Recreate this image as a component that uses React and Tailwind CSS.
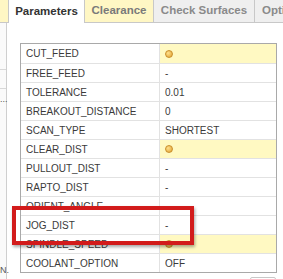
import React from 'react';

const rows = [
  { name: 'CUT_FEED', value: 'dot', hi: true },
  { name: 'FREE_FEED', value: '-' },
  { name: 'TOLERANCE', value: '0.01' },
  { name: 'BREAKOUT_DISTANCE', value: '0' },
  { name: 'SCAN_TYPE', value: 'SHORTEST' },
  { name: 'CLEAR_DIST', value: 'dot', hi: true },
  { name: 'PULLOUT_DIST', value: '-' },
  { name: 'RAPTO_DIST', value: '-' },
  { name: 'ORIENT_ANGLE', value: '' },
  { name: 'JOG_DIST', value: '-' },
  { name: 'SPINDLE_SPEED', value: 'dot', hi: true },
  { name: 'COOLANT_OPTION', value: 'OFF' },
];

const Dot = () => (
  <span className="inline-block w-[8px] h-[8px] rounded-full border border-[#c98f2c] bg-[radial-gradient(circle_at_35%_35%,#ffe08a,#e0a030)]" />
);

export default function App() {
  return (
    <div className="relative w-[283px] h-[279px] overflow-hidden bg-white text-[#3a3a3a] font-['Liberation_Sans',Arial,sans-serif]">
      {/* Tabs */}
      <div className="flex h-[23px] text-[11.5px] font-bold">
        <div className="w-[9px] bg-[#fff7c4] border-r border-b border-[#c8c8c8]" />
        <div className="w-[76px] flex items-center justify-center bg-white text-[#333] border-r border-[#c8c8c8]">
          Parameters
        </div>
        <div className="w-[69px] flex items-center justify-center bg-[#fff7c4] text-[#7a7a7a] border-r border-b border-[#c8c8c8]">
          Clearance
        </div>
        <div className="w-[101px] flex items-center justify-center bg-[#efefef] text-[#8a8a8a] border-r border-b border-[#c8c8c8]">
          Check Surfaces
        </div>
        <div className="flex-1 flex items-center pl-[7px] bg-[#efefef] text-[#8a8a8a] border-b border-[#c8c8c8] overflow-hidden whitespace-nowrap">
          Opti
        </div>
      </div>

      <div className="flex h-[256px]">
        {/* Truncated side panel */}
        <div className="w-[7px] border-r border-[#cfcfcf] bg-[#fafafa] flex flex-col text-[9px] text-[#555]">
          <div className="mt-[46px] border-t border-[#d8d8d8]" />
          <div className="mt-[18px] border-t border-[#d8d8d8]" />
          <div className="mt-[6px] leading-none">...</div>
          <div className="mt-auto mb-[4px] leading-none">N.</div>
        </div>

        {/* Property grid */}
        <div className="pl-[13px] pt-[20px]">
          <div className="w-[257px] border border-[#a9a9a9] text-[10px]">
            {rows.map((r, i) => (
              <div key={r.name} className={`flex h-[19px] ${i > 0 ? 'border-t border-[#e2e2e2]' : ''}`}>
                <div className="w-[139px] pl-[5px] flex items-center border-r border-[#e2e2e2]">{r.name}</div>
                <div className={`flex-1 pl-[5px] flex items-center ${r.hi ? 'bg-[#fff9c2]' : ''}`}>
                  {r.value === 'dot' ? <Dot /> : r.value}
                </div>
              </div>
            ))}
          </div>
          <div className="ml-[230px] mt-[4px] w-[26px] h-[6px] border border-[#c8c8c8] rounded-t-[2px]" />
        </div>
      </div>

      {/* Annotation highlight */}
      <div className="absolute left-[12px] top-[206px] w-[182px] h-[39px] border-[4px] border-[#d21b1b] shadow-[1px_2px_3px_rgba(0,0,0,0.35)]" />
    </div>
  );
}
